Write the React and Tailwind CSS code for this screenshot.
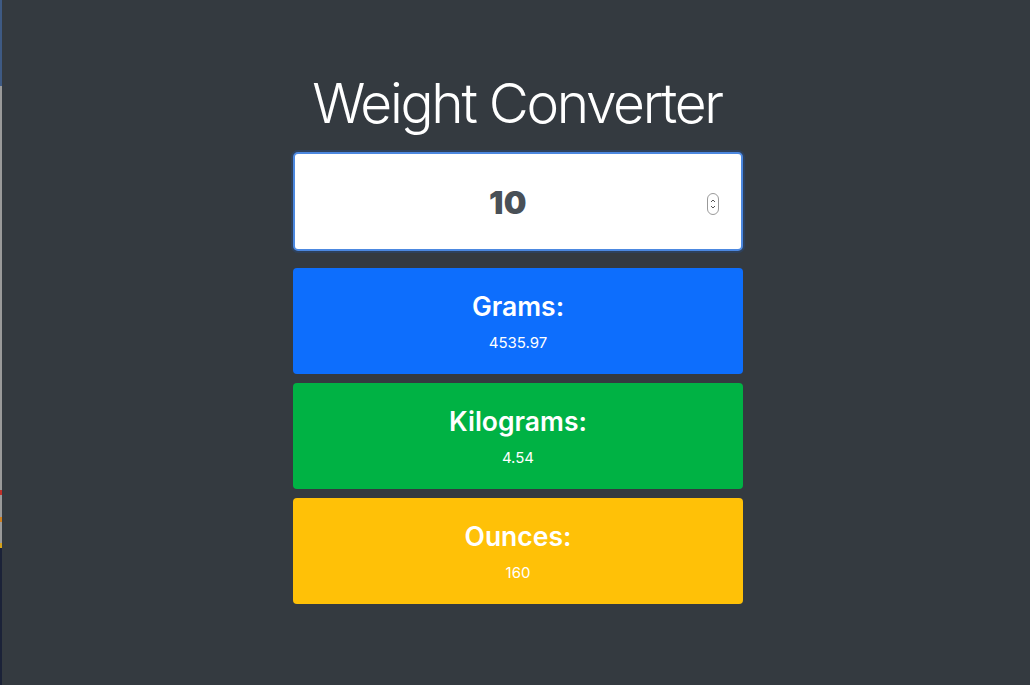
import React from "react";

const font = { fontFamily: "Inter, 'Noto Sans', sans-serif" };

function Card({ bg, label, value }) {
  return (
    <div className={`${bg} rounded-[4px] h-[106px] flex flex-col items-center text-white`}>
      <div className="pt-[21px] text-[26.5px] leading-[34px] font-semibold">{label}</div>
      <div className="mt-[10px] text-[15px] leading-[20px]">{value}</div>
    </div>
  );
}

export default function App() {
  return (
    <div className="min-h-[685px] h-[685px] w-full bg-[#343a40] flex overflow-hidden" style={font}>
      <div className="w-[2px] h-full flex flex-col shrink-0">
        <div className="h-[86px] bg-[#3e5a84]" />
        <div className="h-[404px] bg-[#9a9a9a]" />
        <div className="h-[5px] bg-[#c0302a]" />
        <div className="h-[22px] bg-[#9a9a9a]" />
        <div className="h-[5px] bg-[#d0801e]" />
        <div className="h-[21px] bg-[#9a9a9a]" />
        <div className="h-[5px] bg-[#d4a21a]" />
        <div className="flex-1 bg-[#1b2238]" />
      </div>
      <div className="flex-1 flex flex-col items-center pt-[70px] pl-[4px]">
        <h1 className="text-[55px] leading-[67px] font-light text-white tracking-[-2.3px] -translate-x-[1px]">Weight Converter</h1>
        <div className="w-[450px] mt-[15px] flex flex-col">
          <div className="relative h-[99px] bg-white rounded-[5px] border-2 border-[#4c88e0] shadow-[0_0_0_2px_rgba(13,110,253,0.15)] flex items-center justify-center pr-[20px]">
            <span className="text-[32px] font-black text-[#495057] tracking-[0.5px] mt-[3px]">10</span>
            <div className="absolute right-[22px] top-[39px] w-[12px] h-[22px] border border-[#9a9a9a] rounded-[6px] flex flex-col items-center justify-center gap-[2px]">
              <svg width="6" height="4" viewBox="0 0 6 4"><path d="M1 3 L3 1 L5 3" fill="none" stroke="#555" strokeWidth="1" /></svg>
              <svg width="6" height="4" viewBox="0 0 6 4"><path d="M1 1 L3 3 L5 1" fill="none" stroke="#555" strokeWidth="1" /></svg>
            </div>
          </div>
          <div className="mt-[17px] flex flex-col gap-[9px]">
            <Card bg="bg-[#0d6efd]" label="Grams:" value="4535.97" />
            <Card bg="bg-[#00b244]" label="Kilograms:" value="4.54" />
            <Card bg="bg-[#ffc107]" label="Ounces:" value="160" />
          </div>
        </div>
      </div>
    </div>
  );
}
